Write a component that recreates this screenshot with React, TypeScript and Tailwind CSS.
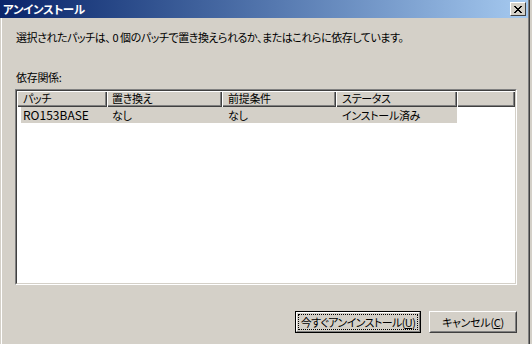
import React from 'react'

// Win2000 style "アンインストール" dialog
const COLUMNS = [
  { label: 'パッチ', width: 'w-[90px]', pad: 'pl-[6px]' },
  { label: '置き換え', width: 'w-[115px]', pad: 'pl-[5px]' },
  { label: '前提条件', width: 'w-[114px]', pad: 'pl-[6px]' },
  { label: 'ステータス', width: 'w-[121px]', pad: 'pl-[6px]' },
]

function TitleBar() {
  return (
    <div className="h-[18px] flex items-center justify-between bg-gradient-to-r from-[#0a246a] to-[#a6caf0] pl-[3px] pr-[2px]">
      <span className="text-white font-bold text-[11.5px] leading-[14px]">アンインストール</span>
      <div className="w-[16px] h-[14px] bg-[#d4d0c8] border border-t-white border-l-white border-b-[#404040] border-r-[#404040] flex items-center justify-center">
        <svg width="8" height="7" viewBox="0 0 8 7" shapeRendering="crispEdges">
          <path
            d="M0 0h2v1h1v1h2V1h1V0h2v1H7v1H6v1H5v1h1v1h1v1h1v1H6V6H5V5H3v1H2v1H0V6h1V5h1V4h1V3H2V2H1V1H0z"
            fill="#000"
          />
        </svg>
      </div>
    </div>
  )
}

function HeaderCell({ label, width, pad }: { label: string; width: string; pad: string }) {
  return (
    <div
      className={`${width} ${pad} h-[16px] shrink-0 leading-[15px] shadow-[inset_1px_1px_0_#fff,inset_-1px_-1px_0_#404040,inset_-2px_-2px_0_#808080]`}
    >
      {label}
    </div>
  )
}

function Button({ children, primary }: { children: React.ReactNode; primary?: boolean }) {
  if (primary) {
    return (
      <div className="w-[126px] h-[22px] border border-black">
        <div className="h-full border border-t-white border-l-white border-b-[#808080] border-r-[#808080] p-[1px]">
          <div className="h-full border border-dotted border-black flex items-center justify-center leading-[14px] whitespace-nowrap tracking-[-0.6px]">
            {children}
          </div>
        </div>
      </div>
    )
  }
  return (
    <div className="w-[88px] h-[22px] border border-t-white border-l-white border-b-[#404040] border-r-[#404040]">
      <div className="h-full border border-t-[#d4d0c8] border-l-[#d4d0c8] border-b-[#808080] border-r-[#808080] flex items-center justify-center leading-[14px] whitespace-nowrap">
        {children}
      </div>
    </div>
  )
}

export default function App() {
  return (
    <div className="w-[532px] h-[344px] bg-[#d4d0c8] flex overflow-hidden text-[11px] tracking-[-0.3px] text-black font-['Noto_Sans_CJK_JP','Noto_Sans_CJK_SC',sans-serif] [font-feature-settings:'palt']">
      <div className="w-[528px] flex flex-col">
        <TitleBar />

        <div className="flex-1 ml-[1px] border-l border-white pl-[13px] pr-[11px] pt-[12px] flex flex-col">
          <div className="h-[14px] leading-[14px] pl-[1px] whitespace-nowrap tracking-[-0.45px]">
            選択されたパッチは、 0 個のパッチで置き換えられるか、またはこれらに依存しています。
          </div>
          <div className="h-[14px] leading-[14px] pl-[1px] mt-[26px]">依存関係:</div>

          {/* list view */}
          <div className="mt-[5px] h-[196px] border border-t-[#808080] border-l-[#808080] border-b-white border-r-white">
            <div className="h-full bg-white border border-t-[#404040] border-l-[#404040] border-b-[#d4d0c8] border-r-[#d4d0c8] flex flex-col">
              <div className="flex bg-[#d4d0c8]">
                {COLUMNS.map((c) => (
                  <HeaderCell key={c.label} {...c} />
                ))}
                <div className="flex-1 h-[16px] shadow-[inset_1px_1px_0_#fff,inset_-1px_-1px_0_#404040,inset_-2px_-2px_0_#808080]" />
              </div>
              <div className="ml-[4px] w-[436px] h-[16px] bg-[#d4d0c8] flex leading-[16px]">
                <div className="w-[86px] pl-[2px] text-[12px] tracking-normal">RO153BASE</div>
                <div className="w-[115px] pl-[5px]">なし</div>
                <div className="w-[114px] pl-[6px]">なし</div>
                <div className="w-[121px] pl-[6px]">インストール済み</div>
              </div>
            </div>
          </div>

          <div className="mt-[26px] flex justify-end gap-[8px]">
            <Button primary>
              今すぐアンインストール(<span className="underline">U</span>)
            </Button>
            <Button>
              キャンセル(<span className="underline">C</span>)
            </Button>
          </div>
        </div>
      </div>
      <div className="w-[1px] bg-[#808080]" />
      <div className="w-[1px] bg-[#404040]" />
      <div className="w-[2px]" />
    </div>
  )
}
